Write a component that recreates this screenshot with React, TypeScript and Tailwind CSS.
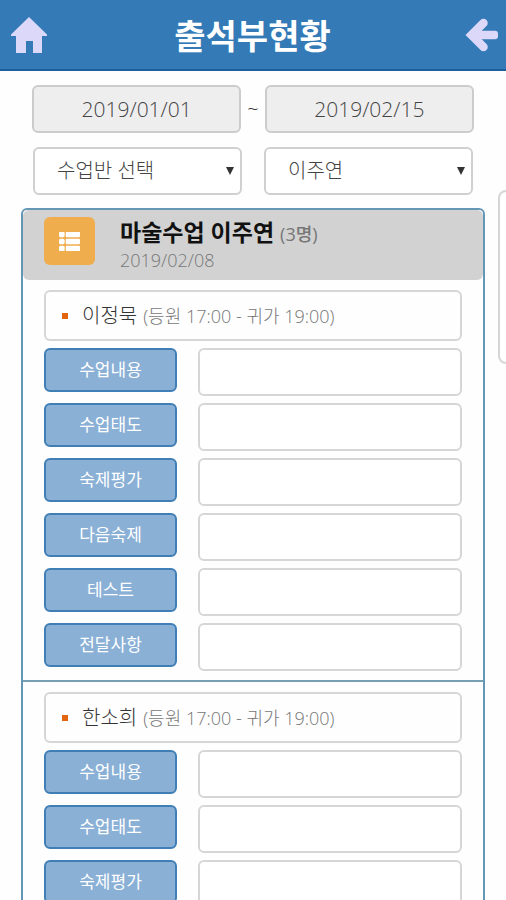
import { useState } from 'react'

const students = [
  {
    name: '이정묵',
    time: '(등원 17:00 - 귀가 19:00)',
    fields: ['수업내용', '수업태도', '숙제평가', '다음숙제', '테스트', '전달사항'],
  },
  {
    name: '한소희',
    time: '(등원 17:00 - 귀가 19:00)',
    fields: ['수업내용', '수업태도', '숙제평가'],
  },
]

function HomeIcon() {
  return (
    <svg viewBox="0 0 36 36" className="size-9" fill="#dcd8fa" aria-hidden="true">
      <path d="M18 0 36 17.500V19h-5v17h-9V24h-7v12H5V19H0v-1.500z" />
    </svg>
  )
}

function BackIcon() {
  return (
    <svg viewBox="0 0 33 34" className="h-[34px] w-[33px]" aria-hidden="true">
      <path d="M18.500 5 6.500 17l12 12" fill="none" stroke="#dcd8fa" strokeWidth="8.500" strokeLinecap="round" />
      <rect x="6" y="12.800" width="27" height="8.500" rx="3" fill="#dcd8fa" />
    </svg>
  )
}

function ListIcon() {
  return (
    <svg viewBox="0 0 21 19" className="h-[19px] w-[21px]" fill="#fff" aria-hidden="true">
      {[0, 7, 14].map((y) => (
        <g key={y}>
          <rect x="0" y={y - 0.3} width="5.600" height="5.600" rx="1.500" />
          <rect x="6.800" y={y - 0.3} width="14.200" height="5.600" rx="1" />
        </g>
      ))}
    </svg>
  )
}

function DateInput({ label, value }: { label: string; value: string }) {
  return (
    <input
      type="text"
      readOnly
      aria-label={label}
      defaultValue={value}
      className="h-12 w-full min-w-0 rounded-md border-2 border-[#cccccc] bg-[#eeeeee] text-center text-[21px] font-light text-[#444444]"
    />
  )
}

function Select({ label, value }: { label: string; value: string }) {
  return (
    <div className="relative min-w-0 flex-1">
      <select
        aria-label={label}
        defaultValue={value}
        className="h-12 w-full appearance-none rounded-md border-2 border-[#d0d0d0] bg-white pl-[22px] text-xl font-light text-[#444444]"
      >
        <option>{value}</option>
      </select>
      <svg viewBox="0 0 8 8" className="pointer-events-none absolute top-5 right-2 size-2" fill="#333" aria-hidden="true">
        <path d="M0 0h8L4 8z" />
      </svg>
    </div>
  )
}

function Student({ name, time, fields }: { name: string; time: string; fields: string[] }) {
  const [notes, setNotes] = useState<Record<string, string>>({})

  return (
    <section className="px-[21px] pt-2.5 pb-[9px]">
      <h3 className="mb-[7px] flex h-[51px] items-center rounded-md border-2 border-[#d6d6d6] pl-4 font-light">
        <span className="mr-[14px] size-1.5 bg-[#e2640f]" />
        <span className="mr-1.5 text-xl text-[#333333]">{name}</span>
        <span className="text-lg text-[#777777]">{time}</span>
      </h3>
      <div className="flex flex-col gap-[7px]">
        {fields.map((field) => (
          <div key={field} className="flex items-start gap-[21px]">
            <button
              type="button"
              className="h-11 w-[133px] shrink-0 rounded-md border-2 border-[#3f7fb5] bg-[#8ab0d6] text-[17px] text-white"
            >
              {field}
            </button>
            <input
              type="text"
              aria-label={`${name} ${field}`}
              value={notes[field] ?? ''}
              onChange={(e) => setNotes({ ...notes, [field]: e.target.value })}
              className="h-12 min-w-0 flex-1 rounded-md border-2 border-[#d6d6d6] bg-white px-3 text-lg"
            />
          </div>
        ))}
      </div>
    </section>
  )
}

export default function App() {
  return (
    <div className="relative min-h-screen overflow-hidden bg-[#fefefe] font-['Open_Sans','Noto_Sans_CJK_KR',sans-serif]">
      <header className="flex h-[71px] items-center border-b-2 border-[#1d5f9b] bg-[#337ab7] pr-2 pl-[11px]">
        <a href="#home" aria-label="홈" className="w-9">
          <HomeIcon />
        </a>
        <h1 className="flex-1 pt-1 text-center text-[34px] font-bold text-white">출석부현황</h1>
        <a href="#back" aria-label="뒤로" className="flex w-10 justify-end">
          <BackIcon />
        </a>
      </header>

      <div className="flex items-center gap-1.5 px-8 pt-3.5">
        <DateInput label="시작일" value="2019/01/01" />
        <span className="text-xl font-light text-[#333333]">~</span>
        <DateInput label="종료일" value="2019/02/15" />
      </div>
      <div className="flex gap-[22px] px-[33px] pt-3.5">
        <Select label="수업반" value="수업반 선택" />
        <Select label="선생님" value="이주연" />
      </div>

      <main className="mx-[21px] mt-[13px] rounded-t-md border-2 border-[#6597b5]">
        <div className="flex h-[70px] gap-[25px] rounded-md bg-[#d2d2d2] pt-[7px] pl-[21px]">
          <button
            type="button"
            aria-label="목록"
            className="flex h-12 w-[51px] items-center justify-center rounded-md bg-[#f0ad4e]"
          >
            <ListIcon />
          </button>
          <div>
            <h2 className="text-[23px] leading-[30px] font-bold text-[#111111]">
              마술수업 이주연 <span className="text-lg font-medium text-[#777777]">(3명)</span>
            </h2>
            <p className="text-lg leading-6 font-light text-[#777777]">2019/02/08</p>
          </div>
        </div>
        <div className="divide-y-2 divide-[#78a0b4]">
          {students.map((student) => (
            <Student key={student.name} {...student} />
          ))}
        </div>
      </main>

      <aside
        aria-label="메뉴"
        className="absolute top-[190px] -right-2 h-[174px] w-4 rounded-l-lg border-2 border-[#d6d6d6] bg-white"
      />
    </div>
  )
}
